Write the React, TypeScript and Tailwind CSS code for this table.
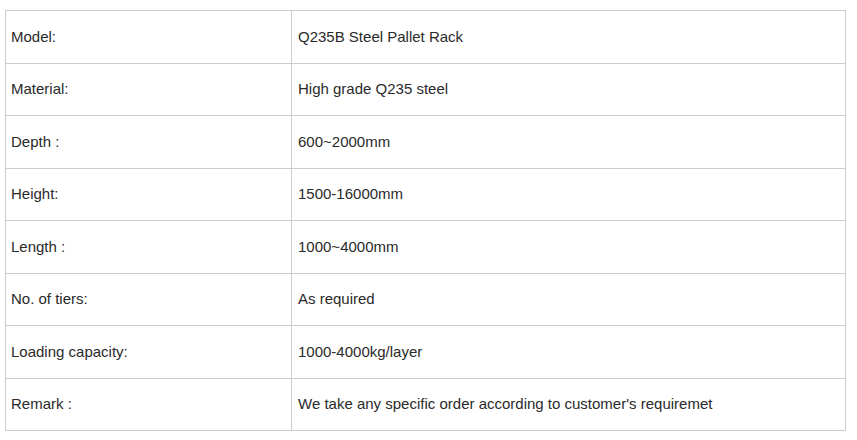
import React from 'react';

const rows: [string, string][] = [
  ['Model:', 'Q235B Steel Pallet Rack'],
  ['Material:', 'High grade Q235 steel'],
  ['Depth :', '600~2000mm'],
  ['Height:', '1500-16000mm'],
  ['Length :', '1000~4000mm'],
  ['No. of tiers:', 'As required'],
  ['Loading capacity:', '1000-4000kg/layer'],
  ['Remark :', "We take any specific order according to customer's requiremet"],
];

export default function App() {
  return (
    <div className="w-[857px] h-[440px] bg-white pt-[10px] pl-[5px] font-['Liberation_Sans',Arial,sans-serif] text-[15px] text-[#2a2a2a]">
      <table className="w-[841px] border-collapse">
        <tbody>
          {rows.map(([label, value]) => (
            <tr key={label} className="h-[52.5px]">
              <td className="w-[286px] border border-[#ccc] pl-[5px] align-middle">{label}</td>
              <td className="border border-[#ccc] pl-[6px] align-middle">{value}</td>
            </tr>
          ))}
        </tbody>
      </table>
    </div>
  );
}
